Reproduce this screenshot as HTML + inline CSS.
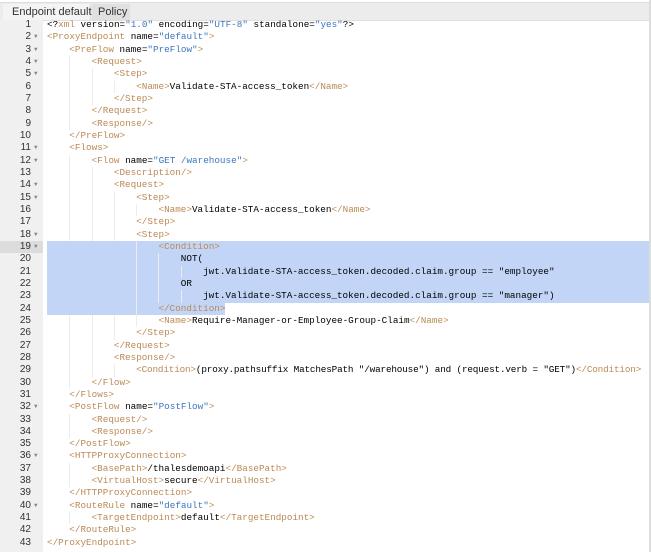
<!DOCTYPE html>
<html><head><meta charset="utf-8"><style>
html,body{margin:0;padding:0;width:651px;height:552px;overflow:hidden;background:#fff;}
.tabs{position:absolute;left:0;top:2px;width:649px;height:17px;background:#ececec;border-top:1px solid #ddd;border-bottom:1px solid #e0e0e0;}
.tab{position:absolute;top:1px;height:16px;font:11px "Liberation Sans",sans-serif;color:#333;line-height:16px;white-space:nowrap;box-sizing:border-box;}
.t1{left:3px;width:88px;padding-left:9px;background:#f4f4f4;border-right:1px solid #ddd;}
.t2{left:92px;width:38px;padding-left:6px;background:#e0e0e0;}
.rb{position:absolute;left:649px;top:0;width:2px;height:552px;background:#ddd;}
.gut{position:absolute;left:0;top:20px;width:43px;height:532px;background:#f0f0f0;}
.code{position:absolute;left:0;top:19px;width:649px;font:9.3px/12.33px "Liberation Mono",monospace;color:#000;}
.l{position:relative;height:12.33px;white-space:pre;}
.n{position:absolute;left:0;width:31px;text-align:right;color:#333;font:10px/12.33px "Liberation Sans",sans-serif;}
.a{position:absolute;left:34px;font-size:6px;color:#888;}
.c{position:absolute;left:47px;}
.t{color:#bb8a55;}
.s{color:#3c76bf;}
.hl{background:#c2d5f6;}
.hg .n{background:#dcdcdc;width:43px;padding-right:12px;box-sizing:border-box;}
i{font-style:normal;display:inline-block;width:22.3px;height:12.33px;vertical-align:top;box-sizing:border-box;}
i.g{border-left:1px solid #ececec;}
</style></head><body>
<div class="tabs"><div class="tab t1">Endpoint default</div><div class="tab t2">Policy</div></div>
<div class="rb"></div>
<div class="gut"></div>
<div class="code">
<div class="l"><span class="n">1</span><span class="c">&lt;?<span class="t">xml</span> version=<span class="s">"1.0"</span> encoding=<span class="s">"UTF-8"</span> standalone=<span class="s">"yes"</span>?&gt;</span></div>
<div class="l"><span class="n">2</span><span class="a">▼</span><span class="c"><span class="t">&lt;ProxyEndpoint</span> name=<span class="s">"default"</span><span class="t">&gt;</span></span></div>
<div class="l"><span class="n">3</span><span class="a">▼</span><span class="c"><i></i><span class="t">&lt;PreFlow</span> name=<span class="s">"PreFlow"</span><span class="t">&gt;</span></span></div>
<div class="l"><span class="n">4</span><span class="a">▼</span><span class="c"><i></i><i class="g"></i><span class="t">&lt;Request&gt;</span></span></div>
<div class="l"><span class="n">5</span><span class="a">▼</span><span class="c"><i></i><i class="g"></i><i class="g"></i><span class="t">&lt;Step&gt;</span></span></div>
<div class="l"><span class="n">6</span><span class="c"><i></i><i class="g"></i><i class="g"></i><i class="g"></i><span class="t">&lt;Name&gt;</span>Validate-STA-access_token<span class="t">&lt;/Name&gt;</span></span></div>
<div class="l"><span class="n">7</span><span class="c"><i></i><i class="g"></i><i class="g"></i><span class="t">&lt;/Step&gt;</span></span></div>
<div class="l"><span class="n">8</span><span class="c"><i></i><i class="g"></i><span class="t">&lt;/Request&gt;</span></span></div>
<div class="l"><span class="n">9</span><span class="c"><i></i><i class="g"></i><span class="t">&lt;Response/&gt;</span></span></div>
<div class="l"><span class="n">10</span><span class="c"><i></i><span class="t">&lt;/PreFlow&gt;</span></span></div>
<div class="l"><span class="n">11</span><span class="a">▼</span><span class="c"><i></i><span class="t">&lt;Flows&gt;</span></span></div>
<div class="l"><span class="n">12</span><span class="a">▼</span><span class="c"><i></i><i class="g"></i><span class="t">&lt;Flow</span> name=<span class="s">"GET /warehouse"</span><span class="t">&gt;</span></span></div>
<div class="l"><span class="n">13</span><span class="c"><i></i><i class="g"></i><i class="g"></i><span class="t">&lt;Description/&gt;</span></span></div>
<div class="l"><span class="n">14</span><span class="a">▼</span><span class="c"><i></i><i class="g"></i><i class="g"></i><span class="t">&lt;Request&gt;</span></span></div>
<div class="l"><span class="n">15</span><span class="a">▼</span><span class="c"><i></i><i class="g"></i><i class="g"></i><i class="g"></i><span class="t">&lt;Step&gt;</span></span></div>
<div class="l"><span class="n">16</span><span class="c"><i></i><i class="g"></i><i class="g"></i><i class="g"></i><i class="g"></i><span class="t">&lt;Name&gt;</span>Validate-STA-access_token<span class="t">&lt;/Name&gt;</span></span></div>
<div class="l"><span class="n">17</span><span class="c"><i></i><i class="g"></i><i class="g"></i><i class="g"></i><span class="t">&lt;/Step&gt;</span></span></div>
<div class="l"><span class="n">18</span><span class="a">▼</span><span class="c"><i></i><i class="g"></i><i class="g"></i><i class="g"></i><span class="t">&lt;Step&gt;</span></span></div>
<div class="l hg"><span class="n">19</span><span class="a">▼</span><span class="c hl" style="right:0"><i></i><i></i><i></i><i></i><i class="g"></i><span class="t">&lt;Condition&gt;</span></span></div>
<div class="l"><span class="n">20</span><span class="c hl" style="right:0"><i></i><i></i><i></i><i></i><i class="g"></i><i class="g"></i>NOT(</span></div>
<div class="l"><span class="n">21</span><span class="c hl" style="right:0"><i></i><i></i><i></i><i></i><i class="g"></i><i class="g"></i><i class="g"></i>jwt.Validate-STA-access_token.decoded.claim.group == "employee"</span></div>
<div class="l"><span class="n">22</span><span class="c hl" style="right:0"><i></i><i></i><i></i><i></i><i class="g"></i><i class="g"></i>OR</span></div>
<div class="l"><span class="n">23</span><span class="c hl" style="right:0"><i></i><i></i><i></i><i></i><i class="g"></i><i class="g"></i><i class="g"></i>jwt.Validate-STA-access_token.decoded.claim.group == "manager")</span></div>
<div class="l"><span class="n">24</span><span class="c hl"><i></i><i></i><i></i><i></i><i class="g"></i><span class="t">&lt;/Condition&gt;</span></span></div>
<div class="l"><span class="n">25</span><span class="c"><i></i><i class="g"></i><i class="g"></i><i class="g"></i><i class="g"></i><span class="t">&lt;Name&gt;</span>Require-Manager-or-Employee-Group-Claim<span class="t">&lt;/Name&gt;</span></span></div>
<div class="l"><span class="n">26</span><span class="c"><i></i><i class="g"></i><i class="g"></i><i class="g"></i><span class="t">&lt;/Step&gt;</span></span></div>
<div class="l"><span class="n">27</span><span class="c"><i></i><i class="g"></i><i class="g"></i><span class="t">&lt;/Request&gt;</span></span></div>
<div class="l"><span class="n">28</span><span class="c"><i></i><i class="g"></i><i class="g"></i><span class="t">&lt;Response/&gt;</span></span></div>
<div class="l"><span class="n">29</span><span class="c" style="letter-spacing:-0.15px"><i></i><i class="g"></i><i class="g"></i><i class="g"></i><span class="t">&lt;Condition&gt;</span>(proxy.pathsuffix MatchesPath "/warehouse") and (request.verb = "GET")<span class="t">&lt;/Condition&gt;</span></span></div>
<div class="l"><span class="n">30</span><span class="c"><i></i><i class="g"></i><span class="t">&lt;/Flow&gt;</span></span></div>
<div class="l"><span class="n">31</span><span class="c"><i></i><span class="t">&lt;/Flows&gt;</span></span></div>
<div class="l"><span class="n">32</span><span class="a">▼</span><span class="c"><i></i><span class="t">&lt;PostFlow</span> name=<span class="s">"PostFlow"</span><span class="t">&gt;</span></span></div>
<div class="l"><span class="n">33</span><span class="c"><i></i><i class="g"></i><span class="t">&lt;Request/&gt;</span></span></div>
<div class="l"><span class="n">34</span><span class="c"><i></i><i class="g"></i><span class="t">&lt;Response/&gt;</span></span></div>
<div class="l"><span class="n">35</span><span class="c"><i></i><span class="t">&lt;/PostFlow&gt;</span></span></div>
<div class="l"><span class="n">36</span><span class="a">▼</span><span class="c"><i></i><span class="t">&lt;HTTPProxyConnection&gt;</span></span></div>
<div class="l"><span class="n">37</span><span class="c"><i></i><i class="g"></i><span class="t">&lt;BasePath&gt;</span>/thalesdemoapi<span class="t">&lt;/BasePath&gt;</span></span></div>
<div class="l"><span class="n">38</span><span class="c"><i></i><i class="g"></i><span class="t">&lt;VirtualHost&gt;</span>secure<span class="t">&lt;/VirtualHost&gt;</span></span></div>
<div class="l"><span class="n">39</span><span class="c"><i></i><span class="t">&lt;/HTTPProxyConnection&gt;</span></span></div>
<div class="l"><span class="n">40</span><span class="a">▼</span><span class="c"><i></i><span class="t">&lt;RouteRule</span> name=<span class="s">"default"</span><span class="t">&gt;</span></span></div>
<div class="l"><span class="n">41</span><span class="c"><i></i><i class="g"></i><span class="t">&lt;TargetEndpoint&gt;</span>default<span class="t">&lt;/TargetEndpoint&gt;</span></span></div>
<div class="l"><span class="n">42</span><span class="c"><i></i><span class="t">&lt;/RouteRule&gt;</span></span></div>
<div class="l"><span class="n">43</span><span class="c"><span class="t">&lt;/ProxyEndpoint&gt;</span></span></div>
</div>
</body></html>
